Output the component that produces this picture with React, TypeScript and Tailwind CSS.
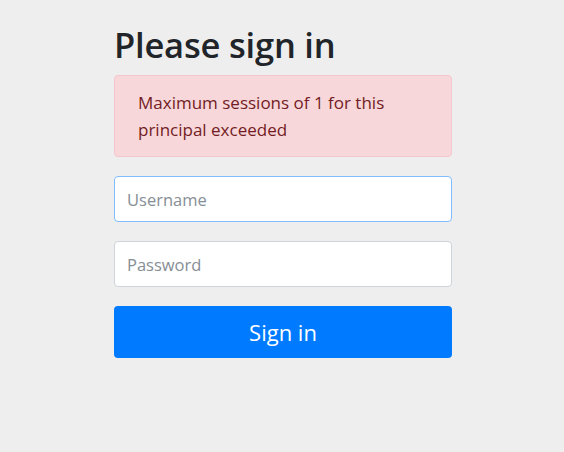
import React, { useState } from 'react';

export default function App() {
  const [username, setUsername] = useState('');
  const [password, setPassword] = useState('');

  return (
    <div
      className="flex min-h-screen w-full justify-center bg-[#eeeeee] pl-[2px] text-[#212529]"
      style={{ fontFamily: '"Open Sans", "Noto Sans", sans-serif' }}
    >
      <div className="w-[338px] pt-[24px]">
        <form className="flex flex-col" onSubmit={(e) => e.preventDefault()}>
          <h2 className="mb-[10px] text-[34.5px] font-semibold leading-[1.2] tracking-[-0.2px]">Please sign in</h2>

          {/* Alert */}
          <div className="mb-[19px] rounded-[4px] border border-[#f5c6cb] bg-[#f8d7da] py-[13px] pl-[23px] pr-5 text-[17px] leading-[27px] text-[#721c24]">
            Maximum sessions of 1 for this principal exceeded
          </div>

          <input
            type="text"
            autoFocus
            value={username}
            onChange={(e) => setUsername(e.target.value)}
            placeholder="Username"
            className="mb-[19px] h-[46px] w-full rounded-[4px] border border-[#80bdff] bg-white px-3 text-[16.5px] text-[#495057] outline-none placeholder:text-[#868e96]"
          />
          <input
            type="password"
            value={password}
            onChange={(e) => setPassword(e.target.value)}
            placeholder="Password"
            className="mb-[19px] h-[46px] w-full rounded-[4px] border border-[#ced4da] bg-white px-3 text-[16.5px] text-[#495057] outline-none placeholder:text-[#868e96]"
          />

          <button
            type="submit"
            className="h-[52px] w-full rounded-[4px] bg-[#007bff] text-[22px] text-white"
          >
            Sign in
          </button>
        </form>
      </div>
    </div>
  );
}
